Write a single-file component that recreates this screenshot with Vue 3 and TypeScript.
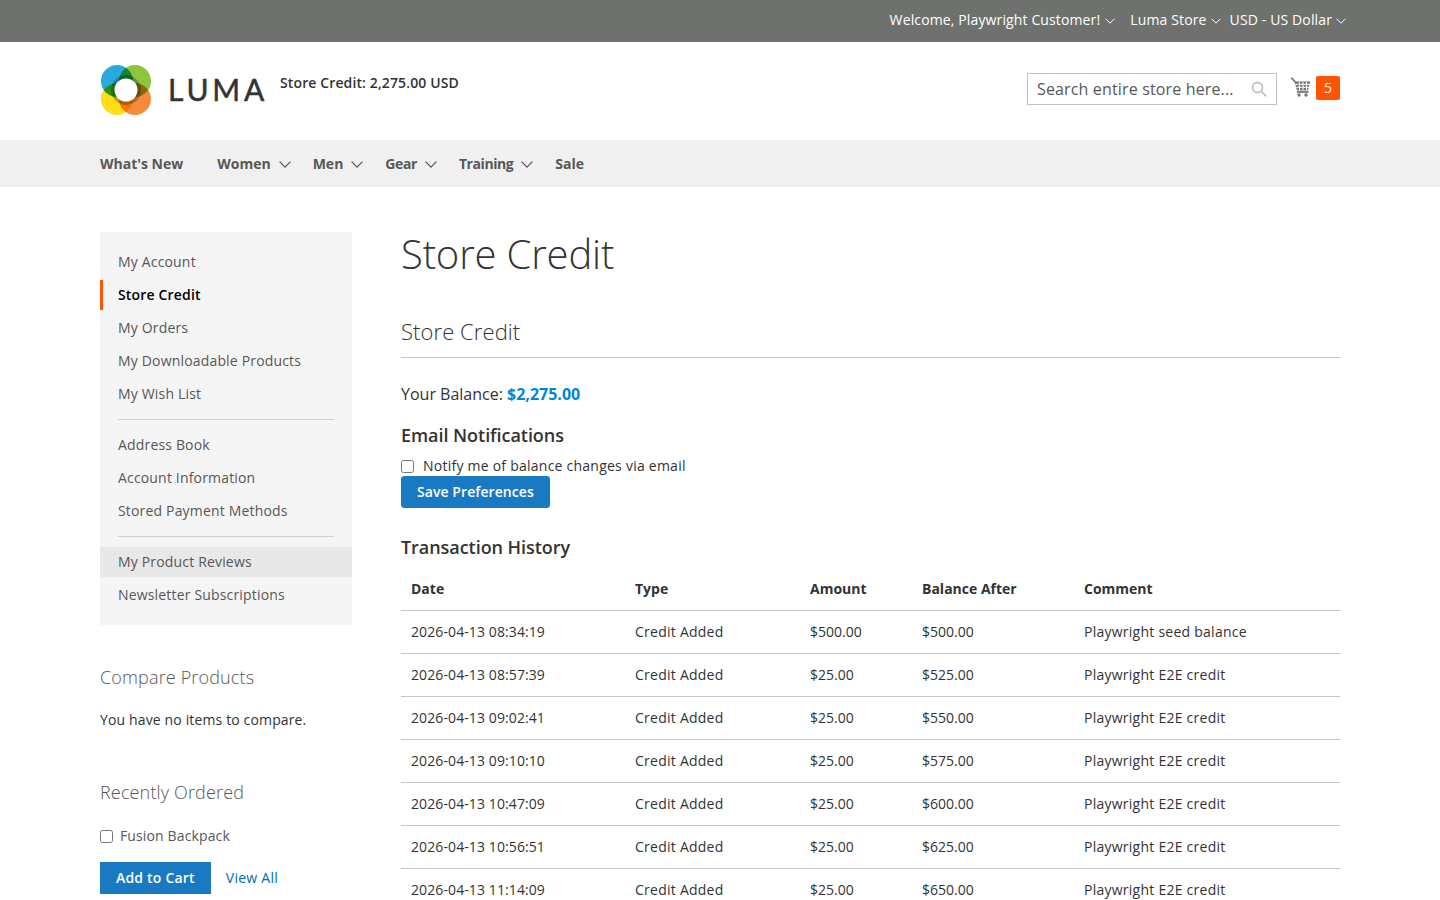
<script setup lang="ts">
const navItems = [
  { label: "What's New", caret: false, tight: false },
  { label: 'Women', caret: true, tight: false },
  { label: 'Men', caret: true, tight: false },
  { label: 'Gear', caret: true, tight: true },
  { label: 'Training', caret: true, tight: true },
  { label: 'Sale', caret: false, tight: false },
]

const accountGroups = [
  ['My Account', 'Store Credit', 'My Orders', 'My Downloadable Products', 'My Wish List'],
  ['Address Book', 'Account Information', 'Stored Payment Methods'],
  ['My Product Reviews', 'Newsletter Subscriptions'],
]

const rows = [
  ['2026-04-13 08:34:19', '$500.00', '$500.00', 'Playwright seed balance'],
  ['2026-04-13 08:57:39', '$25.00', '$525.00', 'Playwright E2E credit'],
  ['2026-04-13 09:02:41', '$25.00', '$550.00', 'Playwright E2E credit'],
  ['2026-04-13 09:10:10', '$25.00', '$575.00', 'Playwright E2E credit'],
  ['2026-04-13 10:47:09', '$25.00', '$600.00', 'Playwright E2E credit'],
  ['2026-04-13 10:56:51', '$25.00', '$625.00', 'Playwright E2E credit'],
  ['2026-04-13 11:14:09', '$25.00', '$650.00', 'Playwright E2E credit'],
]
</script>

<template>
  <div class="page">
    <div class="topbar">
      <span class="top-link welcome">Welcome, Playwright Customer!
        <svg class="chev-sm" viewBox="0 0 10 6"><path d="M.5.7 5 5.2 9.500.7" /></svg>
      </span>
      <span class="top-link store">Luma Store
        <svg class="chev-sm" viewBox="0 0 10 6"><path d="M.5.7 5 5.2 9.500.7" /></svg>
      </span>
      <span class="top-link">USD - US Dollar
        <svg class="chev-sm" viewBox="0 0 10 6"><path d="M.5.7 5 5.2 9.500.7" /></svg>
      </span>
    </div>

    <header class="header">
      <svg class="logo-mark" viewBox="0 0 50 50">
        <circle class="petal" cx="16" cy="16" r="16" fill="#2aa9e0" />
        <circle class="petal" cx="34" cy="16" r="16" fill="#8cc63f" />
        <circle class="petal" cx="16" cy="34" r="16" fill="#ffdd17" />
        <circle class="petal" cx="34" cy="34" r="16" fill="#f58a3c" />
        <circle class="petal" cx="25" cy="25" r="15" fill="#b8bfb4" />
        <circle cx="25" cy="25" r="11.500" fill="#fff" />
      </svg>
      <span class="logo-text">LUMA</span>
      <span class="credit">Store Credit: 2,275.00 USD</span>
      <div class="search">
        <span class="search-text">Search entire store here...</span>
        <svg class="search-icon" viewBox="0 0 16 16">
          <circle cx="6.500" cy="6.500" r="5" />
          <path d="m10.300 10.300 5 5" />
        </svg>
      </div>
      <svg class="cart" viewBox="0 0 20 20">
        <path d="M.3.800 4.800 5.500" class="cart-line" />
        <path d="M3.500 4.500h16l-2.600 9H6z" class="cart-basket" />
        <path d="M4.500 7.300h14.500M5.300 10.300h13M8.500 5v8.500M12 5v8.500M15.500 5v8.500" class="cart-grid" />
        <path d="M6 15h11.500" class="cart-line" />
        <circle cx="8" cy="18" r="1.700" fill="#757575" />
        <circle cx="15" cy="18" r="1.700" fill="#757575" />
      </svg>
      <span class="badge">5</span>
    </header>

    <nav class="nav">
      <span
        v-for="item in navItems"
        :key="item.label"
        class="nav-item"
        :class="{ caret: item.caret, tight: item.tight }"
      >
        {{ item.label }}
        <svg v-if="item.caret" class="chev-lg" viewBox="0 0 12 7"><path d="M.6.700 6 6.100 11.400.700" /></svg>
      </span>
    </nav>

    <main class="main">
      <aside class="sidebar">
        <div class="account-nav">
          <template v-for="(group, i) in accountGroups" :key="i">
            <div v-if="i > 0" class="divider"></div>
            <a
              v-for="link in group"
              :key="link"
              class="account-link"
              :class="{ current: link === 'Store Credit', hovered: link === 'My Product Reviews' }"
            >{{ link }}</a>
          </template>
        </div>

        <h3 class="side-title compare-title">Compare Products</h3>
        <p class="side-text">You have no items to compare.</p>

        <h3 class="side-title recent-title">Recently Ordered</h3>
        <label class="recent-item"><input type="checkbox" /> <span>Fusion Backpack</span></label>
        <div class="recent-actions">
          <button class="btn square">Add to Cart</button>
          <a class="view-all">View All</a>
        </div>
      </aside>

      <section class="content">
        <h1 class="page-title">Store Credit</h1>
        <h2 class="block-title">Store Credit</h2>
        <p class="balance">Your Balance: <strong>$2,275.00</strong></p>
        <h3 class="sub-title">Email Notifications</h3>
        <label class="notify"><input type="checkbox" /> <span>Notify me of balance changes via email</span></label>
        <button class="btn save">Save Preferences</button>
        <h3 class="sub-title history">Transaction History</h3>
        <table class="history-table">
          <colgroup>
            <col style="width: 224px" />
            <col style="width: 175px" />
            <col style="width: 112px" />
            <col style="width: 162px" />
            <col />
          </colgroup>
          <thead>
            <tr>
              <th>Date</th>
              <th>Type</th>
              <th>Amount</th>
              <th>Balance After</th>
              <th>Comment</th>
            </tr>
          </thead>
          <tbody>
            <tr v-for="row in rows" :key="row[0]">
              <td class="date">{{ row[0] }}</td>
              <td class="wide">Credit Added</td>
              <td>{{ row[1] }}</td>
              <td>{{ row[2] }}</td>
              <td class="wide">{{ row[3] }}</td>
            </tr>
          </tbody>
        </table>
      </section>
    </main>
  </div>
</template>

<style>
html,
body {
  margin: 0;
  overflow: hidden;
}
</style>

<style scoped>
.page {
  height: 900px;
  overflow: hidden;
  background: #fff;
  font-family: 'Open Sans', sans-serif;
  font-size: 14px;
  line-height: 20px;
  color: #333;
}

.topbar {
  display: flex;
  justify-content: flex-end;
  align-items: center;
  height: 42px;
  padding: 0 94px 2px 0;
  box-sizing: border-box;
  background: #6e716e;
  color: #fff;
  letter-spacing: 0.13px;
}

.top-link {
  display: flex;
  align-items: center;
  gap: 4px;
  margin-left: 9px;
}

.welcome {
  gap: 5px;
  margin-right: 6px;
}

.chev-sm {
  width: 10px;
  height: 6px;
  margin-top: 2px;
  fill: none;
  stroke: #fff;
  stroke-width: 1;
}

.header {
  display: flex;
  align-items: flex-start;
  height: 98px;
  padding: 23px 100px 0 101px;
  box-sizing: border-box;
}

.logo-mark {
  width: 50px;
  height: 50px;
  isolation: isolate;
}

.petal {
  mix-blend-mode: multiply;
}

.logo-text {
  width: 112px;
  margin: 6px 0 0 17px;
  font-family: Lato, sans-serif;
  font-size: 30px;
  line-height: 36px;
  letter-spacing: 3.8px;
  color: #333;
  -webkit-text-stroke: 0.5px #333;
}

.credit {
  margin: 8px 0 0 0;
  font-weight: 600;
  letter-spacing: 0.12px;
}

.search {
  display: flex;
  align-items: center;
  justify-content: space-between;
  width: 250px;
  height: 32px;
  margin: 8px 0 0 auto;
  padding: 0 9px;
  box-sizing: border-box;
  border: 1px solid #c2c2c2;
  font-size: 16px;
  letter-spacing: 0.15px;
  color: #575757;
}

.search-icon {
  width: 16px;
  height: 16px;
  fill: none;
  stroke: #c2c2c2;
  stroke-width: 1.800;
}

.cart {
  width: 20px;
  height: 20px;
  margin: 12px 0 0 14px;
}

.cart-line {
  fill: none;
  stroke: #757575;
  stroke-width: 1.800;
}

.cart-basket {
  fill: #757575;
}

.cart-grid {
  fill: none;
  stroke: #fff;
  stroke-width: 1;
}

.badge {
  width: 24px;
  height: 24px;
  margin: 11px 0 0 5px;
  border-radius: 2px;
  background: #ff5501;
  color: #fff;
  line-height: 24px;
  text-align: center;
}

.nav {
  display: flex;
  align-items: center;
  height: 47px;
  padding-left: 100px;
  background: #f0f0f0;
  font-weight: 700;
  color: #575757;
}

.nav-item {
  display: flex;
  align-items: center;
  margin-right: 34px;
}

.nav-item.caret {
  margin-right: 22px;
}

.nav-item.tight {
  letter-spacing: -0.42px;
}

.chev-lg {
  width: 12px;
  height: 7px;
  margin: 1px 0 0 8px;
  fill: none;
  stroke: #575757;
  stroke-width: 1.200;
}

.main {
  display: flex;
  gap: 49px;
  padding: 45px 100px 0;
}

.sidebar {
  flex: 0 0 252px;
}

.account-nav {
  display: flex;
  flex-direction: column;
  gap: 3px;
  padding: 15px 0;
  background: #f5f5f5;
  letter-spacing: 0.17px;
}

.account-link {
  padding: 5px 18px 5px 15px;
  color: #575757;
  border-left: 3px solid transparent;
}

.account-link.current {
  border-left-color: #ff5501;
  color: #000;
  font-weight: 600;
}

.account-link.hovered {
  background: #e8e8e8;
}

.divider {
  height: 1px;
  margin: 7px 18px;
  background: #d1d1d1;
}

.side-title {
  margin: 0;
  font-size: 18px;
  font-weight: 300;
  line-height: 24px;
  letter-spacing: 0.15px;
  color: #575757;
}

.compare-title {
  margin-top: 40px;
}

.side-text {
  margin: 21px 0 0;
  letter-spacing: 0.14px;
}

.recent-title {
  margin-top: 50px;
}

.recent-item {
  display: flex;
  align-items: center;
  gap: 7px;
  margin-top: 22px;
  letter-spacing: 0.13px;
  color: #575757;
}

.recent-item input,
.notify input {
  width: 13px;
  height: 13px;
  margin: 0;
}

.recent-actions {
  display: flex;
  align-items: center;
  gap: 15px;
  margin-top: 16px;
}

.btn {
  height: 32px;
  padding: 0 15px 2px;
  border: 1px solid #1979c3;
  border-radius: 3px;
  background: #1979c3;
  color: #fff;
  font-family: inherit;
  font-size: 14px;
  font-weight: 600;
  letter-spacing: 0.07px;
}

.btn.square {
  border-radius: 0;
  letter-spacing: 0.2px;
}

.view-all {
  letter-spacing: 0.25px;
  color: #006bb4;
}

.content {
  flex: 1;
  min-width: 0;
}

.page-title {
  margin: 0;
  font-size: 40px;
  font-weight: 300;
  line-height: 43px;
  letter-spacing: -0.17px;
}

.block-title {
  margin: 42px 0 0;
  padding-bottom: 12px;
  border-bottom: 1px solid #c6c6c6;
  font-size: 22px;
  font-weight: 300;
  line-height: 28px;
  letter-spacing: 0.08px;
}

.balance {
  margin: 26px 0 0;
  font-size: 16px;
  line-height: 20px;
}

.balance strong {
  color: #0086d6;
}

.sub-title {
  margin: 19px 0 0;
  font-size: 18px;
  font-weight: 600;
  line-height: 24px;
  letter-spacing: -0.05px;
}

.notify {
  display: flex;
  align-items: center;
  gap: 9px;
  margin-top: 9px;
  letter-spacing: 0.24px;
  color: #333;
}

.save {
  display: block;
}

.history {
  margin-top: 27px;
}

.history-table {
  width: 100%;
  margin-top: 9px;
  border-collapse: collapse;
  table-layout: fixed;
}

.history-table th {
  height: 42px;
  padding: 0 10px;
  box-sizing: border-box;
  border-bottom: 1px solid #c6c6c6;
  font-weight: 700;
  text-align: left;
}

.history-table td {
  height: 43px;
  padding: 0 10px;
  box-sizing: border-box;
  border-bottom: 1px solid #c6c6c6;
}

.history-table td.date {
  letter-spacing: 0.1px;
}

.history-table td.wide {
  letter-spacing: 0.25px;
}
</style>
